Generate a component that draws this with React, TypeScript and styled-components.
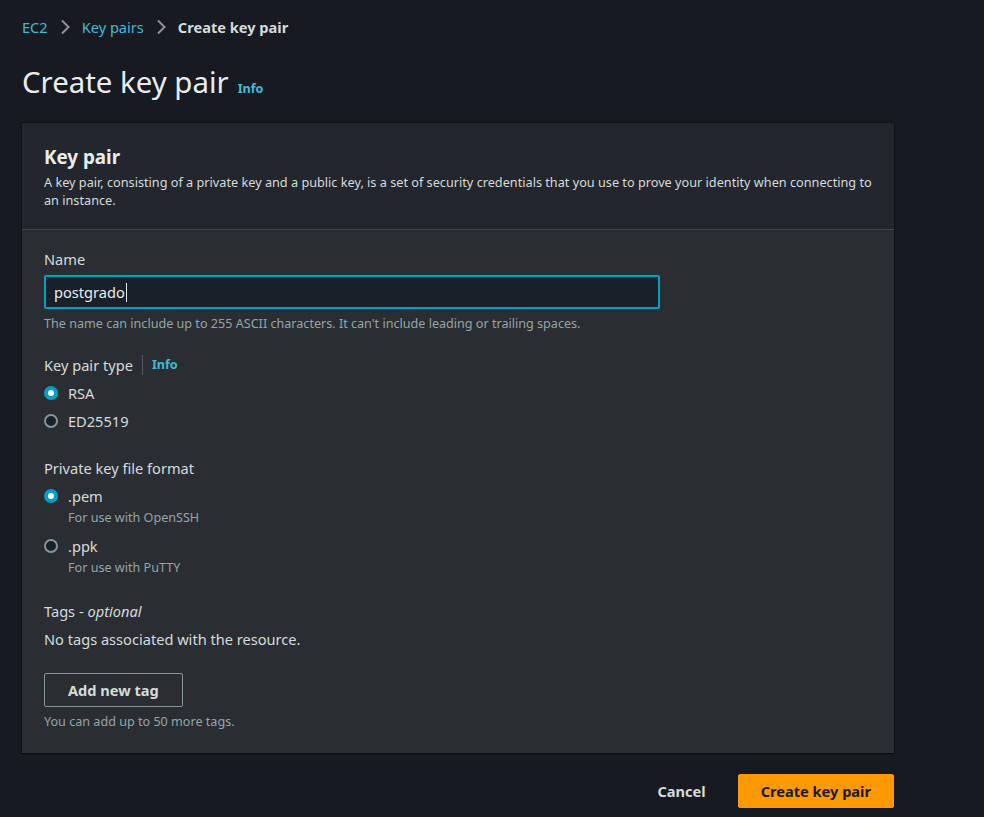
import React from "react";
import styled, { createGlobalStyle } from "styled-components";

const Global = createGlobalStyle`
  html, body { margin: 0; padding: 0; background: #171a21; }
  body { font-family: "Noto Sans", "Open Sans", sans-serif; color: #d1d5db; }
  * { box-sizing: border-box; }
`;

const Page = styled.div`
  width: 984px;
  min-height: 817px;
  background: #171a21;
  padding: 16px 90px 0 22px;
`;

const Crumbs = styled.nav`
  display: flex;
  align-items: center;
  gap: 11px;
  font-size: 14.6px;
  height: 22px;
`;

const CrumbLink = styled.a`
  color: #44b9d6;
  text-decoration: none;
`;

const CrumbCurrent = styled.span`
  color: #d5dbdb;
  font-weight: 700;
`;

const Chevron = () => (
  <svg width="12" height="18" viewBox="0 0 12 18" fill="none">
    <path d="M3 2.5l6.5 6.5-6.5 6.5" stroke="#8d9399" strokeWidth="2" />
  </svg>
);

const TitleRow = styled.div`
  display: flex;
  align-items: baseline;
  gap: 9px;
  margin-top: 27px;
  margin-bottom: 24px;
`;

const Title = styled.h1`
  margin: 0;
  font-size: 29.4px;
  font-weight: 400;
  color: #eaeded;
  line-height: 34px;
`;

const InfoLink = styled.a`
  color: #44b9d6;
  font-size: 12.6px;
  font-weight: 700;
  text-decoration: none;
`;

const Card = styled.section`
  width: 872px;
  background: #2a2e33;
  box-shadow: 0 1px 1px 0 rgba(0, 0, 0, 0.3), 0 0 1px 1px rgba(0, 0, 0, 0.2);
`;

const CardHeader = styled.header`
  background: #23272d;
  border-bottom: 1px solid #414750;
  padding: 22px 22px 20px;
`;

const CardTitle = styled.h2`
  margin: 0;
  font-size: 18.8px;
  font-weight: 700;
  color: #eaeded;
  line-height: 24px;
`;

const CardDesc = styled.p`
  margin: 4px 0 0;
  font-size: 12.7px;
  line-height: 18px;
  color: #d5dbdb;
`;

const CardBody = styled.div`
  padding: 18px 22px 22px;
  display: flex;
  flex-direction: column;
`;

const Field = styled.div<{ gap?: number }>`
  display: flex;
  flex-direction: column;
  margin-bottom: ${(p) => p.gap ?? 0}px;
`;

const Label = styled.div`
  font-size: 14.6px;
  line-height: 22px;
  color: #d5dbdb;
  display: flex;
  align-items: center;
`;

const Divider = styled.span`
  width: 1px;
  height: 20px;
  background: #545b64;
  margin: 0 9px;
`;

const Input = styled.div`
  margin-top: 5px;
  width: 616px;
  height: 34px;
  border: 2px solid #00a1c9;
  border-radius: 2px;
  background: #1a2029;
  padding: 0 8px;
  display: flex;
  align-items: center;
  font-size: 14.6px;
  color: #eaeded;
`;

const Caret = styled.span`
  display: inline-block;
  width: 1px;
  height: 19px;
  background: #eaeded;
  margin-left: 1px;
`;

const Hint = styled.div`
  font-size: 12.6px;
  line-height: 18px;
  color: #95a5a6;
  margin-top: 6px;
`;

const RadioGroup = styled.div<{ spacing: number }>`
  display: flex;
  flex-direction: column;
  margin-top: 6px;
  gap: ${(p) => p.spacing}px;
`;

const RadioRow = styled.label`
  display: grid;
  grid-template-columns: 16px 1fr;
  column-gap: 8px;
  align-items: center;
`;

const RadioCircle = styled.span<{ checked?: boolean }>`
  width: 14px;
  height: 14px;
  border-radius: 50%;
  position: relative;
  ${(p) =>
    p.checked
      ? `background: #00a1c9;`
      : `background: #1a2029; border: 2px solid #879596;`}
  &::after {
    content: "";
    display: ${(p) => (p.checked ? "block" : "none")};
    position: absolute;
    left: 4px;
    top: 4px;
    width: 6px;
    height: 6px;
    border-radius: 50%;
    background: #fff;
  }
`;

const RadioText = styled.span`
  font-size: 14.6px;
  line-height: 22px;
  color: #d5dbdb;
`;

const RadioDesc = styled.span`
  grid-column: 2;
  font-size: 12.6px;
  line-height: 18px;
  color: #95a5a6;
  margin-top: 2px;
`;

const Italic = styled.i`
  font-style: italic;
  margin-left: 4px;
`;

const BodyText = styled.div`
  font-size: 14.6px;
  line-height: 22px;
  color: #d5dbdb;
  margin-top: 6px;
`;

const OutlineButton = styled.button`
  margin-top: 23px;
  align-self: flex-start;
  height: 34px;
  padding: 0 23px;
  background: transparent;
  border: 1px solid #879596;
  border-radius: 2px;
  color: #d5dbdb;
  font-family: inherit;
  font-size: 14.6px;
  font-weight: 700;
`;

const Footer = styled.div`
  width: 872px;
  display: flex;
  justify-content: flex-end;
  align-items: center;
  gap: 12px;
  margin-top: 21px;
`;

const LinkButton = styled.button`
  background: transparent;
  border: none;
  height: 34px;
  padding: 0 20px;
  color: #d5dbdb;
  font-family: inherit;
  font-size: 14.6px;
  font-weight: 700;
`;

const PrimaryButton = styled.button`
  height: 34px;
  padding: 0 22px;
  background: #ff9900;
  border: 1px solid #ff9900;
  border-radius: 2px;
  color: #16191f;
  font-family: inherit;
  font-size: 14.6px;
  font-weight: 700;
`;

export default function App() {
  return (
    <>
      <Global />
      <Page>
        <Crumbs>
          <CrumbLink>EC2</CrumbLink>
          <Chevron />
          <CrumbLink>Key pairs</CrumbLink>
          <Chevron />
          <CrumbCurrent>Create key pair</CrumbCurrent>
        </Crumbs>
        <TitleRow>
          <Title>Create key pair</Title>
          <InfoLink>Info</InfoLink>
        </TitleRow>
        <Card>
          <CardHeader>
            <CardTitle>Key pair</CardTitle>
            <CardDesc>
              A key pair, consisting of a private key and a public key, is a set of security credentials that you use to
              prove your identity when connecting to an instance.
            </CardDesc>
          </CardHeader>
          <CardBody>
            <Field gap={21}>
              <Label>Name</Label>
              <Input>
                postgrado
                <Caret />
              </Input>
              <Hint>The name can include up to 255 ASCII characters. It can't include leading or trailing spaces.</Hint>
            </Field>
            <Field gap={25}>
              <Label>
                Key pair type
                <Divider />
                <InfoLink>Info</InfoLink>
              </Label>
              <RadioGroup spacing={6}>
                <RadioRow>
                  <RadioCircle checked />
                  <RadioText>RSA</RadioText>
                </RadioRow>
                <RadioRow>
                  <RadioCircle />
                  <RadioText>ED25519</RadioText>
                </RadioRow>
              </RadioGroup>
            </Field>
            <Field gap={23}>
              <Label>Private key file format</Label>
              <RadioGroup spacing={8}>
                <RadioRow>
                  <RadioCircle checked />
                  <RadioText>.pem</RadioText>
                  <RadioDesc>For use with OpenSSH</RadioDesc>
                </RadioRow>
                <RadioRow>
                  <RadioCircle />
                  <RadioText>.ppk</RadioText>
                  <RadioDesc>For use with PuTTY</RadioDesc>
                </RadioRow>
              </RadioGroup>
            </Field>
            <Field>
              <Label>
                Tags -<Italic>optional</Italic>
              </Label>
              <BodyText>No tags associated with the resource.</BodyText>
              <OutlineButton>Add new tag</OutlineButton>
              <Hint>You can add up to 50 more tags.</Hint>
            </Field>
          </CardBody>
        </Card>
        <Footer>
          <LinkButton>Cancel</LinkButton>
          <PrimaryButton>Create key pair</PrimaryButton>
        </Footer>
      </Page>
    </>
  );
}
